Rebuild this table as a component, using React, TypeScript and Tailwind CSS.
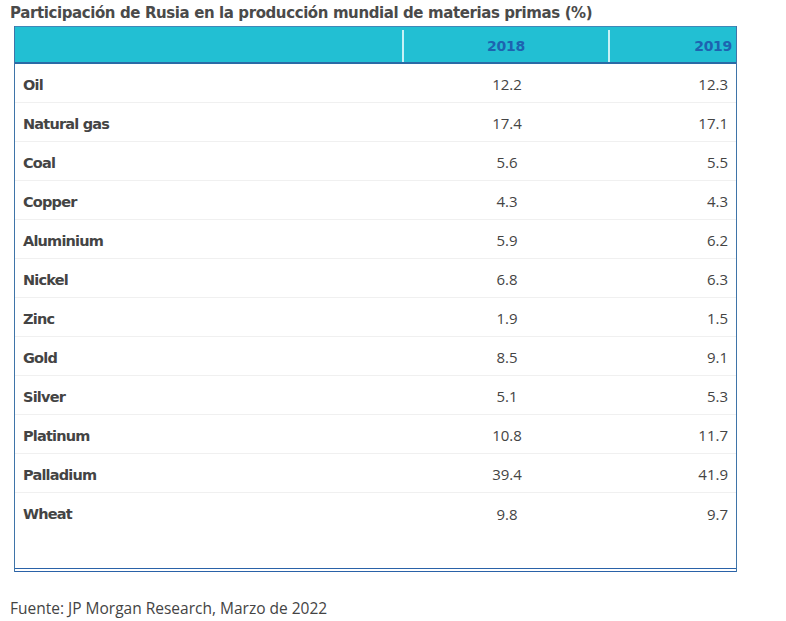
const rows: [string, string, string][] = [
  ["Oil", "12.2", "12.3"],
  ["Natural gas", "17.4", "17.1"],
  ["Coal", "5.6", "5.5"],
  ["Copper", "4.3", "4.3"],
  ["Aluminium", "5.9", "6.2"],
  ["Nickel", "6.8", "6.3"],
  ["Zinc", "1.9", "1.5"],
  ["Gold", "8.5", "9.1"],
  ["Silver", "5.1", "5.3"],
  ["Platinum", "10.8", "11.7"],
  ["Palladium", "39.4", "41.9"],
  ["Wheat", "9.8", "9.7"],
];

const App = () => {
  return (
    <div className="w-[786px] h-[621px] overflow-hidden bg-white text-[#444] font-['Open_Sans',sans-serif]">
      <h1 className="pl-[10px] pt-[2px] h-[26px] text-[15px] font-bold leading-[22px] font-['DejaVu_Sans',sans-serif] tracking-[-0.4px] text-[#4a4a4a]">
        Participación de Rusia en la producción mundial de materias primas (%)
      </h1>

      <div className="ml-[14px] w-[723px] border-x border-[#3f74a8]">
        {/* header */}
        <div className="flex h-[38px] pt-[3px] bg-[#22bfd3] border-t border-[#3f87b8] border-b-2 border-b-[#2a6aa6] text-[14px] font-bold font-['DejaVu_Sans',sans-serif] text-[#1d63b0] tracking-[-0.3px]">
          <div className="w-[389px] border-r-2 border-[#c7f1f6]" />
          <div className="w-[206px] border-r-2 border-[#c7f1f6] flex items-center justify-center">2018</div>
          <div className="flex-1 flex items-center justify-end pr-[4px]">2019</div>
        </div>

        {/* body */}
        <div className="pb-[36px]">
          {rows.map(([name, a, b], i) => (
            <div
              key={name}
              className={`flex h-[39px] pt-[3px] items-center text-[15px] ${i < rows.length - 1 ? "border-b border-[#f0f0f0]" : ""}`}
            >
              <div className="w-[389px] pl-[8px] pt-[2px] text-[14.5px] font-bold font-['DejaVu_Sans',sans-serif] tracking-[-0.8px] text-[#444]">
                {name}
              </div>
              <div className="w-[206px] text-center">{a}</div>
              <div className="flex-1 text-right pr-[8px]">{b}</div>
            </div>
          ))}
        </div>
        <div className="border-b-[4px] border-double border-[#2a62a8]" />
      </div>

      <p className="mt-[25px] pl-[10px] text-[15.5px] leading-[22px] text-[#444]">
        Fuente: JP Morgan Research, Marzo de 2022
      </p>
    </div>
  );
};

export default App;
